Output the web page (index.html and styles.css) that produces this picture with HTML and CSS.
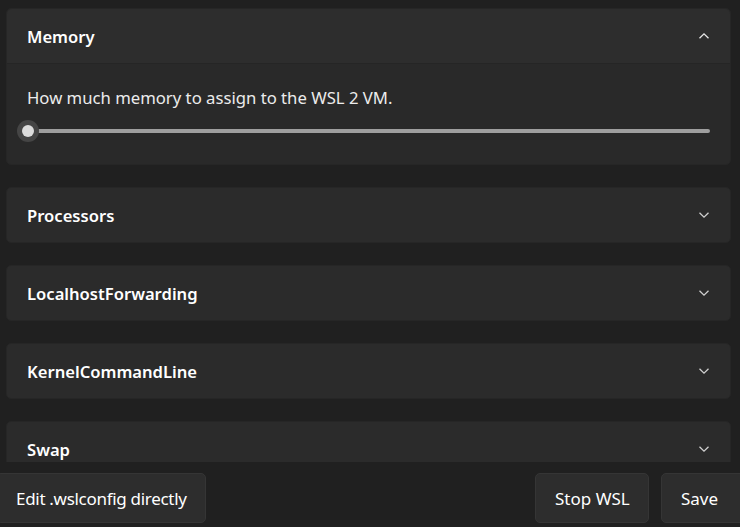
FILE: index.html
```html
<!DOCTYPE html>
<html>
<head>
<meta charset="utf-8">
<link rel="stylesheet" href="styles.css">
</head>
<body>
<div class="app">
  <div class="list">
    <section class="card open">
      <div class="card-head">
        <span class="title">Memory</span>
        <svg class="chev" width="12" height="8" viewBox="0 0 12 8"><path d="M1.5 6.2 L6 1.8 L10.5 6.2" fill="none" stroke="#e6e6e6" stroke-width="1.3"/></svg>
      </div>
      <div class="card-body">
        <p class="desc">How much memory to assign to the WSL 2 VM.</p>
        <div class="slider">
          <span class="thumb"><span class="dot"></span></span>
          <span class="track"></span>
        </div>
      </div>
    </section>
    <section class="card">
      <div class="card-head">
        <span class="title">Processors</span>
        <svg class="chev" width="12" height="8" viewBox="0 0 12 8"><path d="M1.5 1.8 L6 6.2 L10.5 1.8" fill="none" stroke="#d0d0d0" stroke-width="1.3"/></svg>
      </div>
    </section>
    <section class="card">
      <div class="card-head">
        <span class="title">LocalhostForwarding</span>
        <svg class="chev" width="12" height="8" viewBox="0 0 12 8"><path d="M1.5 1.8 L6 6.2 L10.5 1.8" fill="none" stroke="#d0d0d0" stroke-width="1.3"/></svg>
      </div>
    </section>
    <section class="card">
      <div class="card-head">
        <span class="title">KernelCommandLine</span>
        <svg class="chev" width="12" height="8" viewBox="0 0 12 8"><path d="M1.5 1.8 L6 6.2 L10.5 1.8" fill="none" stroke="#d0d0d0" stroke-width="1.3"/></svg>
      </div>
    </section>
    <section class="card">
      <div class="card-head">
        <span class="title">Swap</span>
        <svg class="chev" width="12" height="8" viewBox="0 0 12 8"><path d="M1.5 1.8 L6 6.2 L10.5 1.8" fill="none" stroke="#d0d0d0" stroke-width="1.3"/></svg>
      </div>
    </section>
  </div>
  <div class="footer">
    <button class="btn btn-edit">Edit .wslconfig directly</button>
    <div class="spacer"></div>
    <button class="btn btn-stop">Stop WSL</button>
    <button class="btn btn-save">Save</button>
  </div>
</div>
</body>
</html>
```
FILE: styles.css
```css
html, body {
  margin: 0;
  padding: 0;
  background: #202020;
  overflow: hidden;
}
body {
  font-family: "Noto Sans", "Open Sans", sans-serif;
  color: #ffffff;
}
.app {
  width: 740px;
  height: 527px;
  display: flex;
  flex-direction: column;
  overflow: hidden;
}
.list {
  height: 462px;
  overflow: hidden;
  padding: 8px 9px 0 6px;
  box-sizing: border-box;
  display: flex;
  flex-direction: column;
  gap: 22px;
}
.card {
  background: #2b2b2b;
  border-radius: 5px;
  flex-shrink: 0;
  border: 1px solid #262626;
}
.card.open {
  background: #292929;
}
.card-head {
  height: 54px;
  display: flex;
  align-items: center;
  justify-content: space-between;
  padding: 0 20px 0 20px;
}
.open .card-head {
  background: #2d2d2d;
  border-bottom: 1px solid #252525;
  border-radius: 5px 5px 0 0;
}
.title {
  font-size: 16.6px;
  font-weight: 600;
  color: #ffffff;
}
.chev {
  display: block;
}
.card-body {
  height: 100px;
  box-sizing: border-box;
  padding: 23px 20px 0 20px;
}
.desc {
  margin: 0;
  font-size: 16.7px;
  line-height: 22px;
  color: #ececec;
}
.slider {
  position: relative;
  height: 22px;
  margin-top: 11px;
  display: flex;
  align-items: center;
}
.track {
  display: block;
  height: 4px;
  margin-left: 10px;
  width: 674px;
  background: #9e9e9e;
  border-radius: 2px;
}
.thumb {
  position: absolute;
  left: -10px;
  top: 0;
  width: 22px;
  height: 22px;
  border-radius: 50%;
  background: #454545;
  display: flex;
  align-items: center;
  justify-content: center;
}
.dot {
  width: 12px;
  height: 12px;
  border-radius: 50%;
  background: #dcdcdc;
}
.footer {
  flex: 1;
  display: flex;
  align-items: flex-start;
  padding-top: 11px;
  gap: 12px;
  margin-right: -30px;
}
.spacer {
  flex: 1;
}
.btn {
  height: 50px;
  background: #2d2d2d;
  border: 1px solid #353535;
  border-radius: 5px;
  color: #ffffff;
  font-family: "Noto Sans", "Open Sans", sans-serif;
  font-size: 17px;
  padding: 0 19px;
  white-space: nowrap;
  text-align: left;
  cursor: pointer;
}
.btn-edit {
  width: 210px;
  margin-left: -4px;
  letter-spacing: -0.3px;
}
.btn-stop {
  width: 114px;
}
.btn-save {
  width: 109px;
}
```
